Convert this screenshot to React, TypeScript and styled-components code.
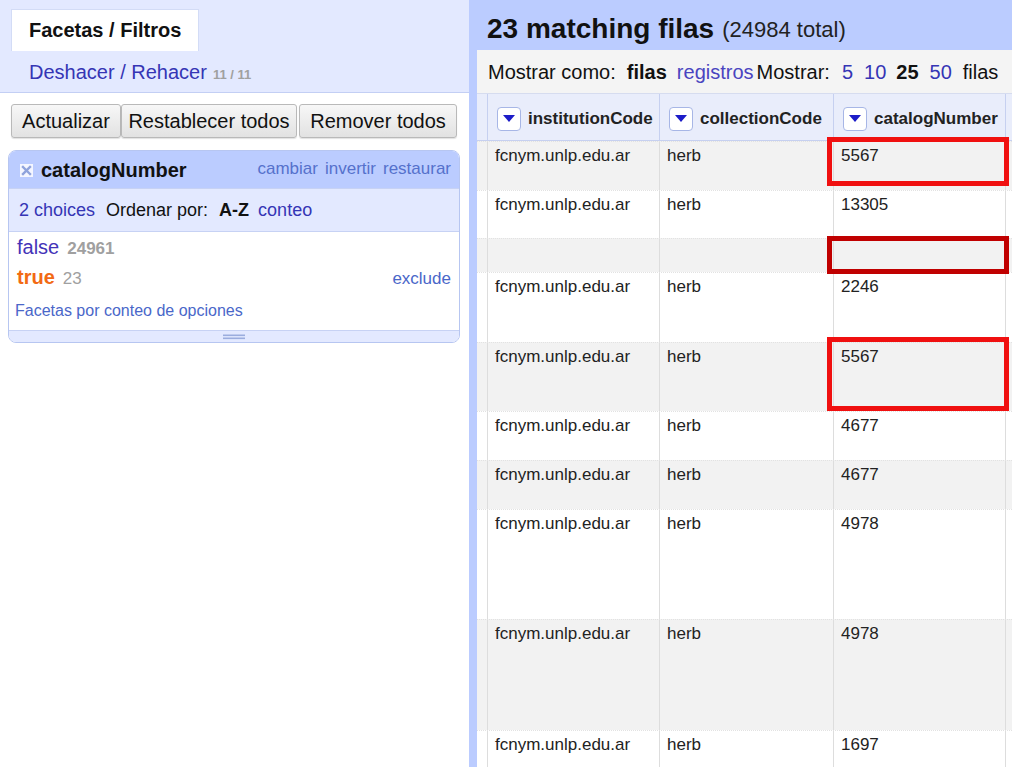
import React from "react";
import styled, { createGlobalStyle } from "styled-components";

const GlobalStyle = createGlobalStyle`
  html, body { margin: 0; padding: 0; background: #ffffff; }
  body { font-family: "Liberation Sans", Arial, sans-serif; color: #222; overflow: hidden; }
  * { box-sizing: border-box; }
`;

const Page = styled.div`
  display: flex;
  width: 1012px;
  height: 767px;
  overflow: hidden;
`;

/* ---------- Left panel ---------- */
const LeftPanel = styled.div`
  width: 469px;
  flex: none;
  display: flex;
  flex-direction: column;
  background: #ffffff;
`;

const LeftTop = styled.div`
  height: 93px;
  flex: none;
  background: #e3e9ff;
  border-bottom: 1px solid #c3cff4;
  padding: 9px 0 0 11px;
`;

const Tab = styled.div`
  width: 188px;
  height: 42px;
  background: #ffffff;
  border: 1px solid #d3dcf6;
  border-bottom: none;
  display: flex;
  align-items: center;
  padding-left: 17px;
  font-size: 20px;
  font-weight: bold;
  color: #111;
`;

const UndoLine = styled.div`
  display: flex;
  align-items: baseline;
  gap: 6px;
  padding: 10px 0 0 18px;
  font-size: 20px;
`;

const Link = styled.span<{ $color?: string; $size?: number; $bold?: boolean }>`
  color: ${(p) => p.$color ?? "#3535b5"};
  font-size: ${(p) => (p.$size ? `${p.$size}px` : "inherit")};
  font-weight: ${(p) => (p.$bold ? "bold" : "normal")};
  cursor: pointer;
`;

const Muted = styled.span<{ $size: number; $bold?: boolean }>`
  color: #a0a0a0;
  font-size: ${(p) => p.$size}px;
  font-weight: ${(p) => (p.$bold ? "bold" : "normal")};
`;

const ButtonRow = styled.div`
  display: flex;
  flex: none;
  padding: 11px 0 0 11px;
`;

const Button = styled.button<{ $w: number; $gap?: number }>`
  width: ${(p) => p.$w}px;
  height: 34px;
  margin-left: ${(p) => p.$gap ?? 0}px;
  padding: 0;
  font-family: "Liberation Sans", Arial, sans-serif;
  font-size: 20px;
  color: #111;
  background: linear-gradient(#f7f7f7, #e2e2e2);
  border: 1px solid #b9b9b9;
  border-radius: 3px;
  box-shadow: 0 1px 1px rgba(0, 0, 0, 0.12);
`;

const FacetBox = styled.div`
  margin: 12px 0 0 8px;
  width: 452px;
  flex: none;
  border: 1px solid #b7c6f1;
  border-radius: 8px;
  overflow: hidden;
  background: #ffffff;
`;

const FacetHeader = styled.div`
  height: 37px;
  background: #bbccff;
  display: flex;
  align-items: center;
  padding: 1px 8px 0 11px;
`;

const FacetTitle = styled.span`
  margin-left: 8px;
  font-size: 20px;
  font-weight: bold;
  color: #111;
  flex: 1;
`;

const HeaderLinks = styled.div`
  display: flex;
  gap: 7px;
  font-size: 17px;
  margin-top: -3px;
`;

const FacetControls = styled.div`
  height: 44px;
  background: #e3e9ff;
  border-top: 1px solid #c7d2f4;
  border-bottom: 1px solid #c7d2f4;
  display: flex;
  align-items: center;
  padding-left: 10px;
  font-size: 18px;
`;

const Plain = styled.span<{ $ml?: number; $bold?: boolean }>`
  margin-left: ${(p) => p.$ml ?? 0}px;
  font-weight: ${(p) => (p.$bold ? "bold" : "normal")};
  color: #111;
`;

const Spaced = styled.span<{ $ml: number }>`
  margin-left: ${(p) => p.$ml}px;
`;

const Choices = styled.div`
  padding: 0 8px 9px 8px;
`;

const ChoiceRow = styled.div`
  display: flex;
  align-items: baseline;
  height: 30px;
  line-height: 30px;
`;

const ChoiceName = styled.span<{ $color: string; $bold?: boolean }>`
  font-size: 20px;
  color: ${(p) => p.$color};
  font-weight: ${(p) => (p.$bold ? "bold" : "normal")};
  margin-right: 8px;
`;

const Exclude = styled.span`
  margin-left: auto;
  font-size: 17px;
  color: #4a67c9;
`;

const FacetNote = styled.div`
  margin-top: 9px;
  line-height: 20px;
  font-size: 16px;
  color: #4a67c9;
  margin-left: -2px;
`;

const ResizeHandle = styled.div`
  height: 12px;
  background: #e3e9ff;
  border-top: 1px solid #c7d2f4;
  display: flex;
  justify-content: center;
  align-items: center;
`;

/* ---------- Right panel ---------- */
const RightPanel = styled.div`
  flex: 1;
  position: relative;
  background: #bbccff;
  display: flex;
  flex-direction: column;
  overflow: hidden;
`;

const Summary = styled.div`
  height: 50px;
  flex: none;
  display: flex;
  align-items: center;
  padding: 7px 0 0 18px;
  gap: 8px;
`;

const SummaryCount = styled.span`
  font-size: 28px;
  font-weight: bold;
  color: #111;
`;

const SummaryTotal = styled.span`
  font-size: 22px;
  color: #222;
  margin-top: 3px;
`;

const Content = styled.div`
  flex: 1;
  min-height: 0;
  overflow: hidden;
  margin-left: 8px;
  background: #ffffff;
  display: flex;
  flex-direction: column;
`;

const ViewBar = styled.div`
  height: 44px;
  flex: none;
  background: #f4f4f4;
  border-bottom: 1px solid #d6dcef;
  display: flex;
  align-items: center;
  padding: 1px 0 0 11px;
  font-size: 20px;
  white-space: nowrap;
`;

const COLS = "10px 172px 174px 172px 1fr";

const HeadRow = styled.div`
  display: grid;
  flex: none;
  grid-template-columns: ${COLS};
  height: 47px;
  background: #e9edfb;
  border-bottom: 1px solid #c6d0f0;
`;

const HeadCell = styled.div<{ $first?: boolean }>`
  display: flex;
  align-items: center;
  gap: 7px;
  padding: 3px 0 0 ${(p) => (p.$first ? 0 : 9)}px;
  border-left: ${(p) => (p.$first ? "none" : "1px solid #c6d0f0")};
  font-size: 17px;
  font-weight: bold;
  color: #222;
  white-space: nowrap;
  overflow: hidden;
`;

const DropButton = styled.span`
  width: 24px;
  height: 24px;
  flex: none;
  border: 1px solid #a7b6e6;
  border-radius: 4px;
  background: #ffffff;
  display: flex;
  align-items: center;
  justify-content: center;
`;

const Row = styled.div<{ $h: number; $alt: boolean }>`
  display: grid;
  grid-template-columns: ${COLS};
  height: ${(p) => p.$h}px;
  flex: none;
  background: ${(p) => (p.$alt ? "#f2f2f2" : "#ffffff")};
  border-top: 1px dotted #e2e2e2;
`;

const Cell = styled.div<{ $first?: boolean }>`
  padding: 4px 0 0 ${(p) => (p.$first ? 0 : 7)}px;
  border-left: ${(p) => (p.$first ? "none" : "1px solid #dddddd")};
  font-size: 17px;
  line-height: 20px;
  color: #222;
  white-space: nowrap;
  overflow: hidden;
`;

const Highlight = styled.div<{ $top: number; $h: number; $color: string }>`
  position: absolute;
  left: 358px;
  top: ${(p) => p.$top}px;
  width: 182px;
  height: ${(p) => p.$h}px;
  border: 5px solid ${(p) => p.$color};
  pointer-events: none;
`;

const CloseIcon = () => (
  <svg width="13" height="13" viewBox="0 0 13 13">
    <rect x="0" y="0" width="13" height="13" fill="#f4f6ff" />
    <path d="M3 3 L10 10 M10 3 L3 10" stroke="#8fa3dc" strokeWidth="2.4" strokeLinecap="square" />
  </svg>
);

const DownTriangle = () => (
  <svg width="12" height="8" viewBox="0 0 12 8">
    <path d="M0 0 L12 0 L6 7 Z" fill="#1c1cc8" />
  </svg>
);

const Grip = () => (
  <svg width="22" height="6" viewBox="0 0 22 6">
    <rect x="0" y="0.5" width="22" height="1.6" fill="#9badde" />
    <rect x="0" y="3.5" width="22" height="1.6" fill="#9badde" />
  </svg>
);

const rows: { h: number; inst: string; coll: string; cat: string }[] = [
  { h: 49, inst: "fcnym.unlp.edu.ar", coll: "herb", cat: "5567" },
  { h: 48, inst: "fcnym.unlp.edu.ar", coll: "herb", cat: "13305" },
  { h: 34, inst: "", coll: "", cat: "" },
  { h: 70, inst: "fcnym.unlp.edu.ar", coll: "herb", cat: "2246" },
  { h: 69, inst: "fcnym.unlp.edu.ar", coll: "herb", cat: "5567" },
  { h: 49, inst: "fcnym.unlp.edu.ar", coll: "herb", cat: "4677" },
  { h: 49, inst: "fcnym.unlp.edu.ar", coll: "herb", cat: "4677" },
  { h: 110, inst: "fcnym.unlp.edu.ar", coll: "herb", cat: "4978" },
  { h: 111, inst: "fcnym.unlp.edu.ar", coll: "herb", cat: "4978" },
  { h: 60, inst: "fcnym.unlp.edu.ar", coll: "herb", cat: "1697" },
];

export default function App() {
  return (
    <>
      <GlobalStyle />
      <Page>
        <LeftPanel>
          <LeftTop>
            <Tab>Facetas / Filtros</Tab>
            <UndoLine>
              <Link>Deshacer / Rehacer</Link>
              <Muted $size={13} $bold>11 / 11</Muted>
            </UndoLine>
          </LeftTop>
          <ButtonRow>
            <Button $w={110}>Actualizar</Button>
            <Button $w={176}>Restablecer todos</Button>
            <Button $w={158} $gap={2}>Remover todos</Button>
          </ButtonRow>
          <FacetBox>
            <FacetHeader>
              <CloseIcon />
              <FacetTitle>catalogNumber</FacetTitle>
              <HeaderLinks>
                <Link $color="#5571cc">cambiar</Link>
                <Link $color="#5571cc">invertir</Link>
                <Link $color="#5571cc">restaurar</Link>
              </HeaderLinks>
            </FacetHeader>
            <FacetControls>
              <Link>2 choices</Link>
              <Plain $ml={11}>Ordenar por:</Plain>
              <Plain $ml={11} $bold>A-Z</Plain>
              <Spaced $ml={9}>
                <Link>conteo</Link>
              </Spaced>
            </FacetControls>
            <Choices>
              <ChoiceRow>
                <ChoiceName $color="#4433b8">false</ChoiceName>
                <Muted $size={17} $bold>24961</Muted>
              </ChoiceRow>
              <ChoiceRow>
                <ChoiceName $color="#f26a14" $bold>true</ChoiceName>
                <Muted $size={17}>23</Muted>
                <Exclude>exclude</Exclude>
              </ChoiceRow>
              <FacetNote>Facetas por conteo de opciones</FacetNote>
            </Choices>
            <ResizeHandle>
              <Grip />
            </ResizeHandle>
          </FacetBox>
        </LeftPanel>

        <RightPanel>
          <Summary>
            <SummaryCount>23 matching filas</SummaryCount>
            <SummaryTotal>(24984 total)</SummaryTotal>
          </Summary>
          <Content>
            <ViewBar>
              <Plain>Mostrar como:</Plain>
              <Plain $ml={11} $bold>filas</Plain>
              <Spaced $ml={10}>
                <Link $color="#4a44c0">registros</Link>
              </Spaced>
              <Plain $ml={3}>Mostrar:</Plain>
              <Spaced $ml={12}>
                <Link>5</Link>
              </Spaced>
              <Spaced $ml={11}>
                <Link>10</Link>
              </Spaced>
              <Plain $ml={10} $bold>25</Plain>
              <Spaced $ml={11}>
                <Link>50</Link>
              </Spaced>
              <Plain $ml={11}>filas</Plain>
            </ViewBar>
            <HeadRow>
              <HeadCell $first />
              <HeadCell>
                <DropButton>
                  <DownTriangle />
                </DropButton>
                institutionCode
              </HeadCell>
              <HeadCell>
                <DropButton>
                  <DownTriangle />
                </DropButton>
                collectionCode
              </HeadCell>
              <HeadCell>
                <DropButton>
                  <DownTriangle />
                </DropButton>
                catalogNumber
              </HeadCell>
              <HeadCell />
            </HeadRow>
            {rows.map((r, i) => (
              <Row key={i} $h={r.h} $alt={i % 2 === 0}>
                <Cell $first />
                <Cell>{r.inst}</Cell>
                <Cell>{r.coll}</Cell>
                <Cell>{r.cat}</Cell>
                <Cell />
              </Row>
            ))}
          </Content>
          <Highlight $top={137} $h={49} $color="#f01010" />
          <Highlight $top={236} $h={38} $color="#c00000" />
          <Highlight $top={337} $h={74} $color="#f01010" />
        </RightPanel>
      </Page>
    </>
  );
}
